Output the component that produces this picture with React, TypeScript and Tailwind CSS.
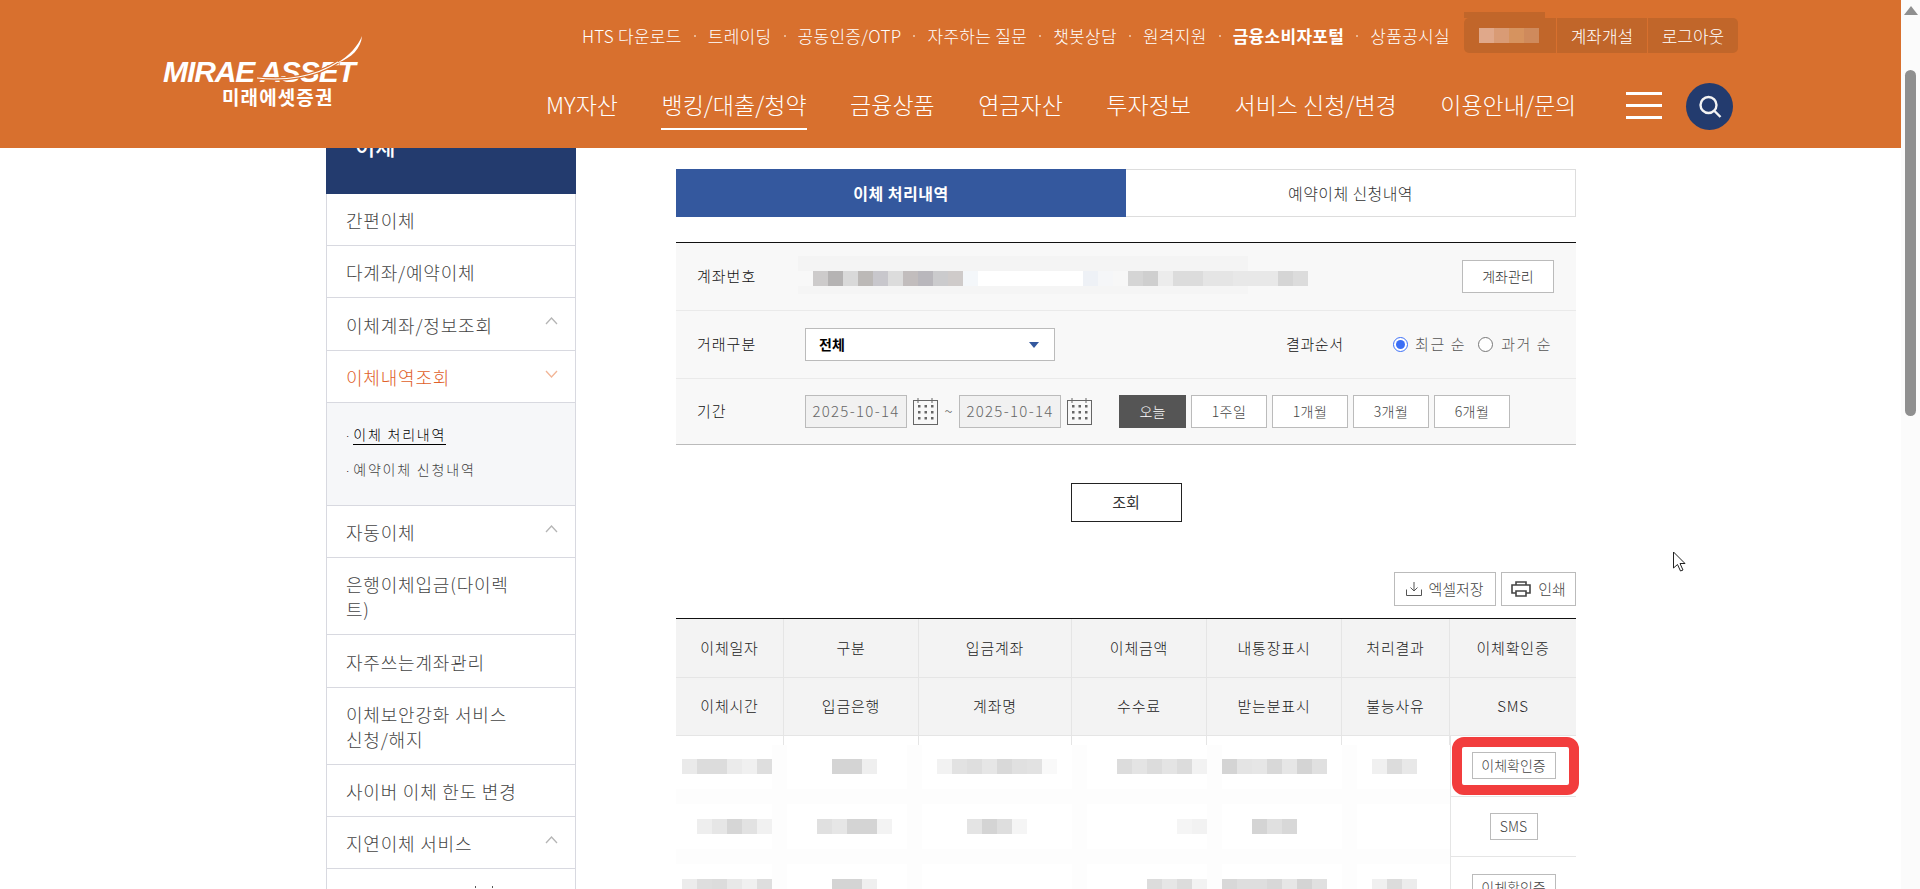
import React from "react";

const topLinks = [
  { label: "HTS 다운로드" },
  { label: "트레이딩" },
  { label: "공동인증/OTP" },
  { label: "자주하는 질문" },
  { label: "챗봇상담" },
  { label: "원격지원" },
  { label: "금융소비자포털", bold: true },
  { label: "상품공시실" },
];

const mainNav = ["MY자산", "뱅킹/대출/청약", "금융상품", "연금자산", "투자정보", "서비스 신청/변경", "이용안내/문의"];

const Blur: React.FC<{ c: string[] }> = ({ c }) => (
  <span className="flex">
    {c.map((x, i) => (
      <span key={i} className="h-[15px] w-[15px]" style={{ backgroundColor: x }} />
    ))}
  </span>
);

const Chevron: React.FC<{ down?: boolean }> = ({ down }) => (
  <svg width="13" height="8" viewBox="0 0 13 8" fill="none" className="mr-[17px] mb-[8px]">
    <path
      d={down ? "M1 1l5.5 6L12 1" : "M1 7l5.5-6L12 7"}
      stroke={down ? "#f2b596" : "#b5b5b5"}
      strokeWidth="1.3"
    />
  </svg>
);

const SideItem: React.FC<{
  h: string;
  children: React.ReactNode;
  active?: boolean;
  up?: boolean;
  down?: boolean;
}> = ({ h, children, active, up, down }) => (
  <div
    className={`flex items-center justify-between border-b border-[#d8d9e0] pl-[19px] pt-[2px] text-[18px] font-light leading-[25px] tracking-[0.8px] ${h} ${
      active ? "text-[#e0602a]" : "text-[#444]"
    }`}
  >
    <span className="w-[180px]">{children}</span>
    {up && <Chevron />}
    {down && <Chevron down />}
  </div>
);

const CalendarIcon = () => (
  <svg width="25" height="27" viewBox="0 0 25 27" fill="none">
    <rect x="0.5" y="2.5" width="24" height="24" stroke="#666" />
    <path d="M5 0v5M19 0v5M8 2.5h9" stroke="#666" />
    {[8, 14, 20].map((y) =>
      [6, 12.5, 19].map((x) => <rect key={`${x}-${y}`} x={x - 1} y={y - 1} width="2.5" height="2.5" fill="#666" />),
    )}
  </svg>
);

const RangeBtn: React.FC<{ label: string }> = ({ label }) => (
  <button className="h-[33px] w-[76px] border border-[#bbb] bg-white text-[14px] font-light tracking-[0.5px] text-[#444]">
    {label}
  </button>
);

const SmallBtn: React.FC<{ label: string; w: string }> = ({ label, w }) => (
  <button className={`h-[27px] border border-[#bbb] bg-white text-[14px] font-light text-[#444] ${w}`}>{label}</button>
);

const columns = "grid grid-cols-[108px_135px_153px_135px_135px_108px]";

const HeadCell: React.FC<{ label: string; last?: boolean }> = ({ label, last }) => (
  <div
    className={`flex items-center justify-center border-[#e5e5e5] text-[15px] font-light tracking-[0.8px] text-[#222] ${
      last ? "" : "border-r"
    }`}
  >
    {label}
  </div>
);

const head1 = ["이체일자", "구분", "입금계좌", "이체금액", "내통장표시", "처리결과", "이체확인증"];
const head2 = ["이체시간", "입금은행", "계좌명", "수수료", "받는분표시", "불능사유", "SMS"];

const App: React.FC = () => {
  return (
    <div className="flex h-screen overflow-hidden bg-white font-['Noto_Sans_CJK_KR','Liberation_Sans',sans-serif]">
      <div className="relative flex min-w-0 flex-1 flex-col">
        <header className="relative z-10 flex h-[148px] shrink-0 bg-[#d8702e] text-white">
          <div className="w-[545px] pl-[163px] pt-[57px]">
            <div className="relative w-[200px]">
              <div className="font-['Liberation_Sans',sans-serif] text-[30px] font-bold italic leading-[30px] tracking-[-1.1px]">
                MIRAE ASSET
              </div>
              <svg width="110" height="50" viewBox="0 0 110 50" fill="none" className="absolute left-[92px] top-[-21px]">
                <path d="M2 42C30 45 60 41 83 26" stroke="#d8702e" strokeWidth="3.4" />
                <path d="M2 42C30 45 60 41 83 26" stroke="#fff" strokeWidth="1.1" />
                <path d="M82 27C94 20 103 10 107 0C106 12 97 22 82 27z" fill="#fff" />
              </svg>
              <div className="ml-[59px] text-[19px] font-bold leading-[20px] tracking-[1.1px]">미래에셋증권</div>
            </div>
          </div>
          <div className="flex flex-col">
            <div className="flex h-[53px] items-end pl-[37px]">
              <div className="flex h-[35px] items-center text-[17px] font-light tracking-[0.3px]">
                {topLinks.map((l, i) => (
                  <React.Fragment key={l.label}>
                    {i > 0 && <span className="mx-[12px] h-[2px] w-[2px] bg-[#eab58f]" />}
                    <a className={l.bold ? "font-bold" : ""}>{l.label}</a>
                  </React.Fragment>
                ))}
              </div>
              <div className="relative ml-[14px] flex h-[35px] w-[274px] rounded-[5px] bg-[#c1662a] text-[17px] font-light">
                <span className="absolute left-0 top-[-6px] h-[6px] w-[81px] bg-[#c1662a]" />
                <div className="flex w-[93px] items-center border-r border-[#d8702e] pl-[15px]">
                  <Blur c={["#e0a88a", "#d99b75", "#d6935f", "#cf8a5c"]} />
                </div>
                <div className="flex w-[91px] items-center justify-center border-r border-[#d8702e]">계좌개설</div>
                <div className="flex flex-1 items-center justify-center">로그아웃</div>
              </div>
            </div>
            <div className="mt-[28px] flex h-[49px] items-center pl-[1px]">
              <nav className="flex gap-[43.5px] text-[23px] font-light">
                {mainNav.map((n, i) => (
                  <a
                    key={n}
                    className={`flex h-[49px] items-center border-b-2 ${i === 1 ? "border-white" : "border-transparent"}`}
                  >
                    {n}
                  </a>
                ))}
              </nav>
              <div className="ml-[50px] flex h-[27px] w-[36px] flex-col justify-between">
                <span className="h-[3px] bg-white" />
                <span className="h-[3px] bg-white" />
                <span className="h-[3px] bg-white" />
              </div>
              <div className="ml-[24px] mt-[2px] flex h-[47px] w-[47px] items-center justify-center rounded-full bg-[#233b6e]">
                <svg width="24" height="24" viewBox="0 0 24 24" fill="none" stroke="#f4f4f4" strokeWidth="2.4">
                  <circle cx="10.500" cy="10" r="8" />
                  <path d="M16.500 16l6 6" />
                </svg>
              </div>
            </div>
          </div>
        </header>

        <div className="flex min-h-0 flex-1">
          <aside className="ml-[326px] w-[250px] shrink-0">
            <div className="h-[46px] overflow-hidden bg-[#233b6e] pl-[29px] text-[22px] font-medium leading-[20px] text-white">
              <div className="mt-[-13px]">이체</div>
            </div>
            <div className="border-x border-[#d8d9e0]">
              <SideItem h="h-[52px]">간편이체</SideItem>
              <SideItem h="h-[52px]">다계좌/예약이체</SideItem>
              <SideItem h="h-[53px]" up>
                이체계좌/정보조회
              </SideItem>
              <SideItem h="h-[52px]" active down>
                이체내역조회
              </SideItem>
              <div className="flex h-[103px] flex-col border-b border-[#d8d9e0] bg-[#f6f7f9] pl-[18px] pt-[21px] text-[14px] font-light leading-[20px] tracking-[1.8px]">
                <div className="text-[#000]">
                  <span className="mr-[1px] text-[10px]">·</span>
                  <span className="border-b border-black">이체 처리내역</span>
                </div>
                <div className="mt-[13px] text-[#444]">
                  <span className="mr-[1px] text-[10px] text-[#000]">·</span>
                  예약이체 신청내역
                </div>
              </div>
              <SideItem h="h-[52px]" up>
                자동이체
              </SideItem>
              <SideItem h="h-[77px]">은행이체입금(다이렉트)</SideItem>
              <SideItem h="h-[53px]">자주쓰는계좌관리</SideItem>
              <SideItem h="h-[77px]">이체보안강화 서비스 신청/해지</SideItem>
              <SideItem h="h-[52px]">사이버 이체 한도 변경</SideItem>
              <SideItem h="h-[52px]" up>
                지연이체 서비스
              </SideItem>
              <div className="flex h-[52px] pl-[148px] pt-[17px]">
                <span className="h-[2px] w-[1px] bg-[#555]" />
                <span className="ml-[16px] h-[2px] w-[1px] bg-[#555]" />
              </div>
            </div>
          </aside>

          <main className="ml-[100px] w-[900px] shrink-0 pt-[21px]">
            <div className="flex h-[48px]">
              <div className="flex w-[450px] items-center justify-center bg-[#34589e] text-[16px] font-bold tracking-[0.5px] text-white">
                이체 처리내역
              </div>
              <div className="flex flex-1 items-center justify-center border border-l-0 border-[#ddd] text-[16px] font-light tracking-[0.4px] text-[#333]">
                예약이체 신청내역
              </div>
            </div>

            <section className="mt-[25px] border-t border-t-[#111] border-b border-b-[#bbb] bg-[#f8f8f8] text-[15px] font-light text-[#111]">
              <div className="flex h-[68px] items-center border-b border-[#eaeaea] pl-[21px]">
                <span className="w-[101px] tracking-[1px]">계좌번호</span>
                <div className="flex flex-1 flex-col self-start pt-[13px]">
                  <Blur c={Array(30).fill("#f4f4f4")} />
                  <div className="ml-[15px] flex">
                    <Blur
                      c={[
                        "#cdcbcb", "#b5b3b3", "#d9d9d9", "#bcb9b7", "#c8c7cc", "#dcdcdc", "#c2bdbd", "#b9b7bc",
                        "#cbcbcd", "#cfcbca", "#f4f7fa", "#fff", "#fff", "#fff", "#fff", "#fff", "#fff", "#fff",
                        "#eef1f6", "#f5f6f8", "#f7f7f7", "#d5d5d5", "#cfcfcf", "#ececec", "#dcdcdc", "#dcdcdc",
                        "#e5e5e5", "#e5e5e5", "#e8e8e8", "#e8e8e8", "#e8e8e8", "#d5d5d5", "#dcdcdc",
                      ]}
                    />
                  </div>
                  <div className="h-[8px] w-[450px] bg-[#f5f5f5]" />
                </div>
                <button className="mr-[22px] h-[33px] w-[92px] border border-[#bbb] bg-white text-[14px] font-light text-[#333]">
                  계좌관리
                </button>
              </div>
              <div className="flex h-[68px] items-center border-b border-[#eaeaea] pl-[21px]">
                <span className="w-[108px] tracking-[1px]">거래구분</span>
                <div className="flex h-[33px] w-[250px] items-center justify-between border border-[#bbb] bg-white pl-[13px] pr-[15px] text-[14px] font-bold text-[#000]">
                  전체
                  <span className="h-0 w-0 border-x-[5px] border-t-[6px] border-x-transparent border-t-[#34589e]" />
                </div>
                <span className="ml-[231px] w-[100px] tracking-[0.6px]">결과순서</span>
                <label className="ml-[7px] flex items-center gap-[7px] tracking-[1.6px] text-[#555]">
                  <input type="radio" name="order" defaultChecked className="h-[15px] w-[15px] accent-[#3b6ef5]" />
                  최근 순
                </label>
                <label className="ml-[12px] flex items-center gap-[8px] tracking-[1.6px] text-[#555]">
                  <input type="radio" name="order" className="h-[15px] w-[15px]" />
                  과거 순
                </label>
              </div>
              <div className="flex h-[65px] items-center pl-[21px]">
                <span className="w-[108px] tracking-[1px]">기간</span>
                <div className="flex items-center">
                  <div className="flex h-[33px] w-[102px] items-center justify-center border border-[#bbb] bg-[#f1f1f1] tracking-[1.3px] text-[#666]">
                    2025-10-14
                  </div>
                  <span className="ml-[6px]">
                    <CalendarIcon />
                  </span>
                  <span className="w-[21px] text-center text-[#666]">~</span>
                  <div className="flex h-[33px] w-[102px] items-center justify-center border border-[#bbb] bg-[#f1f1f1] tracking-[1.3px] text-[#666]">
                    2025-10-14
                  </div>
                  <span className="ml-[6px]">
                    <CalendarIcon />
                  </span>
                </div>
                <div className="ml-[27px] flex gap-[5px]">
                  <button className="h-[33px] w-[67px] bg-[#555] text-[14px] font-light text-white">오늘</button>
                  <RangeBtn label="1주일" />
                  <RangeBtn label="1개월" />
                  <RangeBtn label="3개월" />
                  <RangeBtn label="6개월" />
                </div>
              </div>
            </section>

            <div className="mt-[38px] flex justify-center">
              <button className="h-[39px] w-[111px] border border-[#222] bg-white text-[15px] text-[#333]">조회</button>
            </div>

            <div className="mt-[50px] flex justify-end gap-[5px]">
              <button className="flex h-[34px] w-[102px] items-center justify-center gap-[6px] border border-[#bbb] text-[15px] font-light text-[#444]">
                <svg width="16" height="14" viewBox="0 0 16 14" fill="none" stroke="#555">
                  <path d="M8 0v9M4.500 5.500L8 9l3.500-3.500M0.500 7.500v6h15v-6" />
                </svg>
                엑셀저장
              </button>
              <button className="flex h-[34px] w-[75px] items-center justify-center gap-[7px] border border-[#bbb] text-[15px] font-light text-[#444]">
                <svg width="20" height="16" viewBox="0 0 20 16" fill="none" stroke="#444" strokeWidth="1.6">
                  <path d="M5 4V1h10v3M5 12H1V4h18v8h-4M5 10h10v5H5z" />
                </svg>
                인쇄
              </button>
            </div>

            <div className="mt-[12px] border-t border-[#111]">
              <div className="flex h-[59px] border-b border-[#e5e5e5] bg-[#f3f3f3]">
                <div className={`${columns} w-[774px]`}>
                  {head1.slice(0, 6).map((h) => (
                    <HeadCell key={h} label={h} />
                  ))}
                </div>
                <div className="flex flex-1 items-center justify-center text-[15px] font-light tracking-[0.8px] text-[#222]">
                  {head1[6]}
                </div>
              </div>
              <div className="flex h-[58px] border-b border-[#e5e5e5] bg-[#f3f3f3]">
                <div className={`${columns} w-[774px]`}>
                  {head2.slice(0, 6).map((h) => (
                    <HeadCell key={h} label={h} />
                  ))}
                </div>
                <div className="flex flex-1 items-center justify-center text-[15px] font-light tracking-[0.8px] text-[#222]">
                  {head2[6]}
                </div>
              </div>

              <div className="flex">
                <div className="relative w-[774px]">
                  <div className={`${columns} h-[9px]`}>
                    {[0, 1, 2, 3, 4, 5].map((i) => (
                      <div key={i} className="border-r border-[#e5e5e5]" />
                    ))}
                  </div>
                  {[96, 231, 396, 531, 666].map((x) => (
                    <span key={x} className="absolute bottom-0 top-[9px] w-[15px] bg-[#fdfdfd]" style={{ left: x }} />
                  ))}
                  <div className={`${columns} relative mt-[14px]`}>
                    <div className="flex justify-end pr-[12px]">
                      <Blur c={["#eaeaea", "#dcdcdc", "#dcdcdc", "#ebebeb", "#f0f0f0", "#dedede"]} />
                    </div>
                    <div className="flex justify-center pl-[6px]">
                      <Blur c={["#d4d4d4", "#d4d4d4", "#efefef"]} />
                    </div>
                    <div className="flex justify-center pl-[3px]">
                      <Blur c={["#f2f2f2", "#e2e2e2", "#dedede", "#e6e6e6", "#d9d9d9", "#e0e0e0", "#e2e2e2", "#f9f9f9"]} />
                    </div>
                    <div className="flex justify-end">
                      <Blur c={["#dcdcdc", "#e4e4e4", "#dcdcdc", "#e4e4e4", "#dcdcdc", "#f2f2f2"]} />
                    </div>
                    <div className="flex justify-center">
                      <Blur c={["#d4d4d4", "#e4e4e4", "#e6e6e6", "#d8d8d8", "#e6e6e6", "#d4d4d4", "#e0e0e0"]} />
                    </div>
                    <div className="flex justify-center pr-[3px]">
                      <Blur c={["#f0f0f0", "#dcdcdc", "#e8e8e8"]} />
                    </div>
                  </div>
                  <div className="relative mt-[15px] h-[15px] bg-[#fdfdfd]" />
                  <div className={`${columns} relative mt-[15px]`}>
                    <div className="flex justify-end pr-[12px]">
                      <Blur c={["#eeeeee", "#e6e6e6", "#d6d6d6", "#e2e2e2", "#f1f1f1"]} />
                    </div>
                    <div className="flex justify-center pl-[6px]">
                      <Blur c={["#e0e0e0", "#e6e6e6", "#d4d4d4", "#d4d4d4", "#f3f3f3"]} />
                    </div>
                    <div className="flex justify-center pl-[3px]">
                      <Blur c={["#e4e4e4", "#d4d4d4", "#dedede", "#f5f5f5"]} />
                    </div>
                    <div className="flex justify-end">
                      <Blur c={["#f5f5f5", "#f2f2f2"]} />
                    </div>
                    <div className="flex justify-center">
                      <Blur c={["#d4d4d4", "#e0e0e0", "#d8d8d8"]} />
                    </div>
                    <div />
                  </div>
                  <div className="relative mt-[15px] h-[15px] bg-[#fdfdfd]" />
                  <div className={`${columns} relative mt-[15px]`}>
                    <div className="flex justify-end pr-[12px]">
                      <Blur c={["#ececec", "#dedede", "#dcdcdc", "#e8e8e8", "#f0f0f0", "#dedede"]} />
                    </div>
                    <div className="flex justify-center pl-[6px]">
                      <Blur c={["#d4d4d4", "#d4d4d4", "#efefef"]} />
                    </div>
                    <div />
                    <div className="flex justify-end">
                      <Blur c={["#dcdcdc", "#e6e6e6", "#dcdcdc", "#f2f2f2"]} />
                    </div>
                    <div className="flex justify-center">
                      <Blur c={["#d8d8d8", "#dedede", "#dedede", "#d8d8d8", "#e6e6e6", "#d4d4d4", "#e0e0e0"]} />
                    </div>
                    <div className="flex justify-center pr-[3px]">
                      <Blur c={["#f0f0f0", "#dcdcdc", "#ececec"]} />
                    </div>
                  </div>
                </div>

                <div className="flex-1 border-l border-[#e5e5e5]">
                  <div className="relative flex h-[61px] items-center justify-center border-b border-[#e5e5e5] pb-[1px]">
                    <SmallBtn label="이체확인증" w="w-[84px]" />
                    <span className="absolute bottom-[1px] left-[1px] right-[-3px] top-[1px] rounded-[12px] border-[10px] border-[#f23d3d]" />
                  </div>
                  <div className="flex h-[60px] items-center justify-center border-b border-[#e5e5e5]">
                    <SmallBtn label="SMS" w="w-[48px]" />
                  </div>
                  <div className="flex h-[60px] items-center justify-center">
                    <SmallBtn label="이체확인증" w="w-[84px]" />
                  </div>
                </div>
              </div>
            </div>
          </main>
        </div>

        <svg width="14" height="22" viewBox="0 0 14 22" className="absolute left-[1672px] top-[551px]" fill="#fff" stroke="#222">
          <path d="M1.500 1v16l4-3.500 3 6.500 2.500-1-3-6.500h5z" />
        </svg>
      </div>

      <div className="relative z-20 flex w-[19px] shrink-0 flex-col items-center bg-[#fbfbfb]">
        <span className="mt-[6px] h-0 w-0 border-x-[7px] border-b-[9px] border-x-transparent border-b-[#8f8f8f]" />
        <span className="mt-[55px] h-[346px] w-[11px] rounded-full bg-[#8f8f8f]" />
      </div>
    </div>
  );
};

export default App;
